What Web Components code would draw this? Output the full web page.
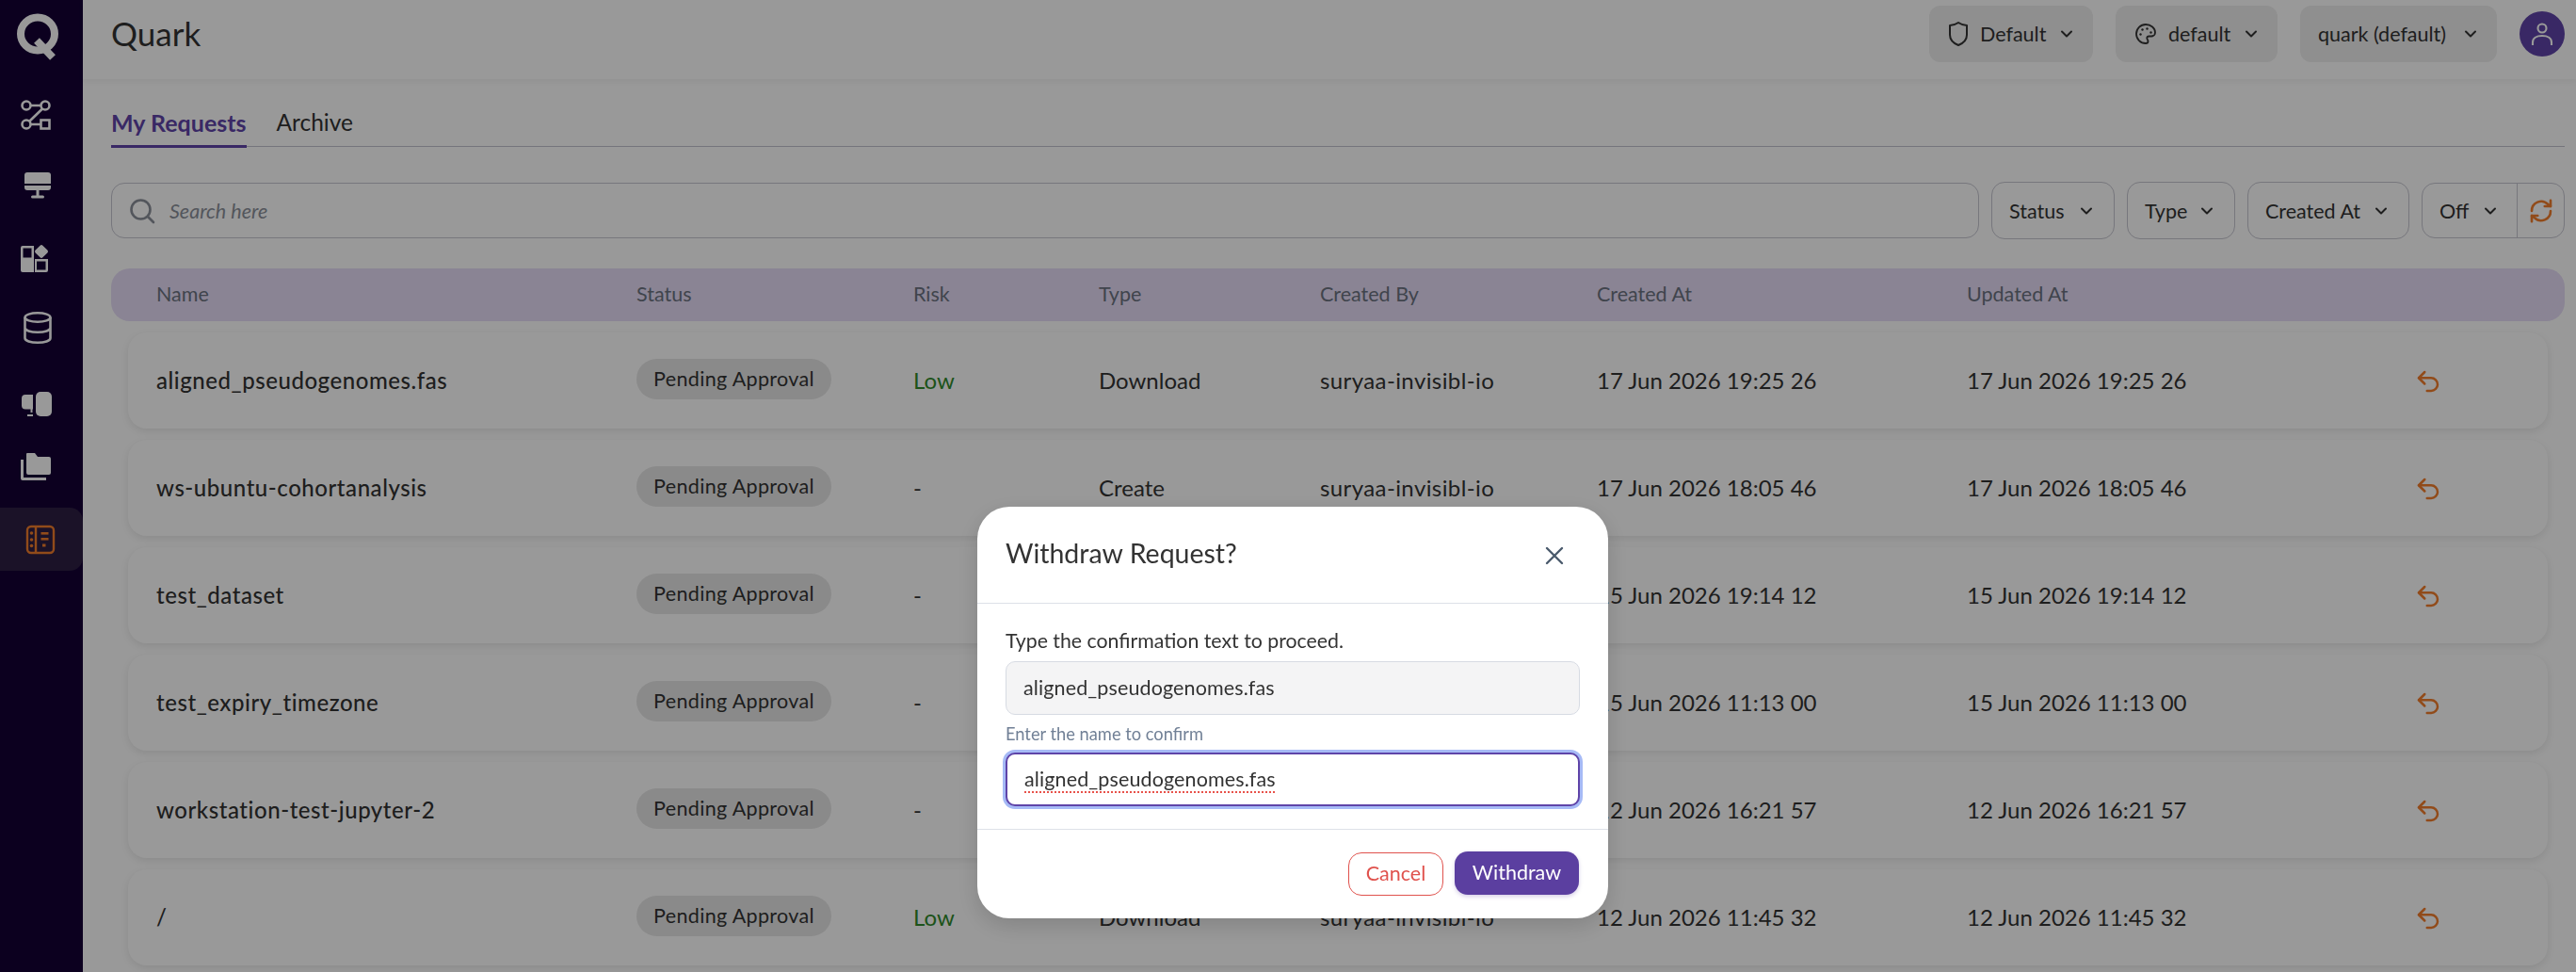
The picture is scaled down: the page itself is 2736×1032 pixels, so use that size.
<!DOCTYPE html>
<html lang="en"><head><meta charset="utf-8"><title>Quark</title>
<style>
html,body{margin:0;padding:0;width:2736px;height:1032px;overflow:hidden;background:#fff}
body{font-family:"Lato","Noto Sans",sans-serif;color:#333}
</style></head>
<body>
<q-app>
  <q-sidebar slot="side"></q-sidebar>
  <q-header slot="head" title="Quark"></q-header>
  <q-tabs slot="main"></q-tabs>
  <q-toolbar slot="main"></q-toolbar>
  <q-table-head slot="main"></q-table-head>
  <q-row slot="main" name="aligned_pseudogenomes.fas" risk="Low" type="Download" by="suryaa-invisibl-io" created="17 Jun 2026 19:25 26"></q-row>
  <q-row slot="main" name="ws-ubuntu-cohortanalysis" risk="-" type="Create" by="suryaa-invisibl-io" created="17 Jun 2026 18:05 46"></q-row>
  <q-row slot="main" name="test_dataset" risk="-" created="15 Jun 2026 19:14 12"></q-row>
  <q-row slot="main" name="test_expiry_timezone" risk="-" created="15 Jun 2026 11:13 00"></q-row>
  <q-row slot="main" name="workstation-test-jupyter-2" risk="-" created="12 Jun 2026 16:21 57"></q-row>
  <q-row slot="main" name="/" risk="Low" type="Download" by="suryaa-invisibl-io" created="12 Jun 2026 11:45 32"></q-row>
</q-app>
<q-overlay>
  <q-modal heading="Withdraw Request?" value="aligned_pseudogenomes.fas"></q-modal>
</q-overlay>
<script>
const chev='<svg width="16" height="16" viewBox="0 0 16 16" fill="none" stroke="currentColor" stroke-width="2" stroke-linecap="round" stroke-linejoin="round"><path d="M3 5.500 8 10.500l5-5"/></svg>';
function def(tag,render){
  customElements.define(tag,class extends HTMLElement{
    connectedCallback(){
      if(this.shadowRoot)return;
      this.attachShadow({mode:'open'}).innerHTML=render(this);
    }
  });
}
def('q-app',()=>`<style>
:host{display:grid;grid-template-columns:88px 1fr;grid-template-rows:84px 1fr;width:2736px;height:1032px;overflow:hidden}
.side{grid-row:1/3}
.main{display:flex;flex-direction:column;padding:0 12px 0 30px;overflow:hidden}
.head{position:relative;z-index:1}
</style>
<div class="side"><slot name="side"></slot></div>
<div class="head"><slot name="head"></slot></div>
<div class="main"><slot name="main"></slot></div>`);

def('q-sidebar',()=>`<style>
:host{display:flex;flex-direction:column;width:88px;height:1032px;background:#140035;color:#fff}
.logo{height:84px;display:flex;justify-content:center}
.logo svg{margin:12px 8px 0 0}
.nav{display:flex;flex-direction:column;padding-top:5px}
.it{height:67px;margin:0 0 7.500px;display:flex;align-items:center}
.a{margin-top:3px;background:#2d1e43;border-radius:0 14px 14px 0;color:#f27d2c}
</style>
<div class="logo"><svg width="48" height="52" viewBox="0 0 48 52" fill="none" stroke="currentColor"><ellipse cx="24" cy="24" rx="18" ry="17.500" stroke-width="8"/><path d="M23 31 40 49" stroke-width="8"/></svg></div>
<div class="nav">
<div class="it"><svg style="margin-left:21px" width="34" height="34" viewBox="0 0 34 34" fill="none" stroke="currentColor" stroke-width="2.600"><circle cx="7" cy="6" r="4.500"/><circle cx="27" cy="6" r="4.500"/><circle cx="7" cy="26" r="4.500"/><rect x="22.500" y="21.500" width="9" height="9"/><path d="M11.500 6H22.500M24 9.500 10 23M11.500 26H22.500"/></svg></div>
<div class="it"><svg style="margin-left:24px" width="32" height="32" viewBox="0 0 32 32" fill="currentColor"><path d="M5 2h22a3 3 0 0 1 3 3v9H2V5a3 3 0 0 1 3-3z"/><path d="M2 16h28v2a3 3 0 0 1-3 3H5a3 3 0 0 1-3-3z"/><rect x="14.500" y="21" width="3" height="6"/><rect x="9" y="26.500" width="14" height="3" rx="1.500"/></svg></div>
<div class="it"><svg style="margin-left:20px;margin-top:3px" width="34" height="34" viewBox="0 0 34 34" fill="currentColor"><path d="M4 5h12v14H2V7a2 2 0 0 1 2-2zM4.500 7.500v10h9v-10z" fill-rule="evenodd"/><rect x="18.500" y="5.500" width="11" height="11" rx="2" transform="rotate(45 24 11)"/><path d="M2 19h14v14H4a2 2 0 0 1-2-2z"/><path d="M17 19h14v12a2 2 0 0 1-2 2H17zM19 21.500v9h9.500v-9z" fill-rule="evenodd"/></svg></div>
<div class="it"><svg style="margin-left:23px;margin-top:4px" width="34" height="36" viewBox="0 0 34 36" fill="none" stroke="currentColor" stroke-width="2.600"><ellipse cx="17" cy="7" rx="13.500" ry="4.800"/><path d="M3.500 7v22c0 2.700 6 4.800 13.500 4.800s13.500-2.100 13.500-4.800V7M3.500 18c0 2.700 6 4.800 13.500 4.800s13.500-2.100 13.500-4.800"/></svg></div>
<div class="it"><svg style="margin-left:22px;margin-top:17px" width="34" height="28" viewBox="0 0 34 28" fill="currentColor"><rect x="16" y="1" width="17" height="26" rx="5"/><path d="M13 4v15.500H5a4 4 0 0 1-4-4v-7.500a4 4 0 0 1 4-4z"/><rect x="7" y="25" width="6" height="2"/><rect x="10.500" y="19" width="2" height="4"/></svg></div>
<div class="it"><svg style="margin-left:21px" width="34" height="32" viewBox="0 0 34 32" fill="currentColor"><path d="M8 2h8l3 4h12a2 2 0 0 1 2 2v15a2 2 0 0 1-2 2H9a2 2 0 0 1-2-2V3a1 1 0 0 1 1-1z"/><path d="M1 9h3v19h24v3H3a2 2 0 0 1-2-2z"/></svg></div>
<div class="it a"><svg style="margin-left:27px" width="32" height="32" viewBox="0 0 32 32" fill="none" stroke="currentColor" stroke-width="2.400"><rect x="2" y="2" width="28" height="28" rx="4"/><path d="M11 2v28"/><g fill="currentColor" stroke="none"><circle cx="6.500" cy="9" r="1.800"/><circle cx="6.500" cy="16" r="1.800"/><circle cx="6.500" cy="22.500" r="1.800"/><rect x="16.500" y="8" width="8" height="2.600"/><rect x="16.500" y="14" width="8" height="2.600"/><rect x="18" y="20.500" width="3.500" height="3"/></g></svg></div>
</div>`);

def('q-select',h=>`<style>
:host{display:inline-flex;align-items:center;font-size:21.500px;color:#333;box-sizing:border-box}
.t{flex:1}
.c{margin-left:13px;display:flex;color:#333}
.i{display:flex;margin-right:12px}
</style>${h.getAttribute('icon')==='shield'?`<span class="i"><svg width="22" height="28" viewBox="0 0 22 28" fill="none" stroke="#333" stroke-width="2" stroke-linejoin="round"><path d="M11 2c3 2 6 3 9 3v10c0 6-4 9-9 11-5-2-9-5-9-11V5c3 0 6-1 9-3z"/></svg></span>`:''}${h.getAttribute('icon')==='palette'?`<span class="i"><svg width="24" height="28" viewBox="0 0 24 24" fill="none" stroke="#333" stroke-width="1.800" stroke-linejoin="round"><path d="M12 2a10 10 0 0 0 0 20c1.400 0 2.500-1 2.500-2.300 0-.6-.3-1.100-.6-1.600-.3-.4-.6-.9-.6-1.500 0-1.200 1-2.100 2.200-2.100H18a4 4 0 0 0 4-4c0-4.700-4.500-8.500-10-8.500z"/><g fill="#333" stroke="none"><circle cx="13.500" cy="6.500" r="1.200"/><circle cx="17.500" cy="10.500" r="1.200"/><circle cx="8.500" cy="7.500" r="1.200"/><circle cx="6.500" cy="12.500" r="1.200"/></g></svg></span>`:''}<span class="t"><slot></slot></span><span class="c">${chev}</span>`);

def('q-header',h=>`<style>
:host{display:flex;align-items:center;height:84px;padding:0 12px 0 30px;box-sizing:border-box;background:#fff;box-shadow:0 3px 6px rgba(0,0,0,.05)}
h1{margin:0;font:400 35px "Lato","Noto Sans",sans-serif;color:#333;flex:1;position:relative;top:-7px}
.r{display:flex;align-items:center;gap:24px;position:relative;top:-6px}
q-select{background:#eee;border-radius:12px;height:60px;padding:0 20px}
.w1{width:174px}.w2{width:172px}.w3{width:209px;padding-left:19px}
.av{width:48px;height:48px;border-radius:50%;background:#5f44a8;display:flex;align-items:center;justify-content:center}
</style><h1>${h.getAttribute('title')}</h1><div class="r">
<q-select class="w1" icon="shield">Default</q-select><q-select class="w2" icon="palette">default</q-select><q-select class="w3">quark (default)</q-select>
<div class="av"><svg width="30" height="34" viewBox="0 0 30 34" fill="none" stroke="#fff" stroke-width="2.100"><circle cx="15" cy="11" r="4.500"/><path d="M5 29v-3c0-4.500 4-7 10-7s10 2.500 10 7v3"/></svg></div></div>`);

def('q-tabs',()=>`<style>
:host{display:flex;gap:32px;height:72px;box-sizing:border-box;border-bottom:1.500px solid #c4c4cf;align-items:flex-end;font-size:24.500px}
span{height:38px;padding-bottom:5px;line-height:38px;margin-bottom:-1.500px;border-bottom:3px solid transparent}
.on{font-size:25px;color:#5f44a8;font-weight:700;border-color:#5f44a8}
</style><span class="on">My Requests</span><span>Archive</span>`);

def('q-toolbar',()=>`<style>
:host{display:flex;align-items:center;gap:13px;margin-top:37px;height:61px;font-size:21.500px}
.s{flex:1;height:59px;box-sizing:border-box;border:1.500px solid #c6c6d0;border-radius:14px;display:flex;align-items:center;padding-left:18px;gap:15px;font-style:italic;color:#8a8f99}
q-select,.off{height:61px;border:1.500px solid #c6c6d0;border-radius:14px}
q-select{padding:0 21px 0 18px}
.off{height:59px;box-sizing:border-box;display:flex;align-items:center;width:152px;flex:none}
.off q-select{border:0;height:100%;padding:0 20px 0 18px;width:101px;border-right:1.500px solid #c6c6d0;border-radius:0}
.ref{flex:1;display:flex;justify-content:center}
</style><div class="s"><svg width="28" height="28" viewBox="0 0 28 28" fill="none" stroke="#8a8f99" stroke-width="2.600"><circle cx="12.500" cy="12.500" r="10"/><path d="M20 20l6 6" stroke-linecap="round"/></svg>Search here</div>
<q-select style="width:131px">Status</q-select><q-select style="width:115px">Type</q-select><q-select style="width:172px">Created At</q-select>
<div class="off"><q-select>Off</q-select><span class="ref"><svg width="30" height="30" viewBox="0 0 24 24" fill="none" stroke="#f27d2c" stroke-width="2.100" stroke-linecap="round" stroke-linejoin="round"><path d="M4 12a8 8 0 0 1 13.700-5.700L20 8"/><path d="M20 3v5h-5"/><path d="M20 12a8 8 0 0 1-13.700 5.700L4 16"/><path d="M9 16H4v5"/></svg></span></div>`);

const cols='grid-template-columns:510px 294px 197px 235px 294px 393px 479px 1fr';
def('q-table-head',()=>`<style>
:host{display:grid;${cols};align-items:center;margin-top:31px;height:56px;padding-left:48px;background:#e6dcf7;border-radius:20px;font-size:21.500px;color:#6b7280}
span{position:relative;top:-1px}
</style><span>Name</span><span>Status</span><span>Risk</span><span>Type</span><span>Created By</span><span>Created At</span><span>Updated At</span><span></span>`);

def('q-row',h=>{const g=a=>h.getAttribute(a)||'';return `<style>
:host{display:grid;${cols};align-items:center;flex:none;height:102px;margin:12px 18px 0;padding-left:30px;background:#fff;border-radius:20px;box-shadow:0 3px 9px rgba(0,0,0,.09);font-size:24px;color:#333}
span{position:relative;top:-1px}
.n{font-weight:500;letter-spacing:.55px}
.by{letter-spacing:.4px}
.p{display:inline-block;top:-1px;background:#e6e6e6;border-radius:22px;height:43px;line-height:43px;padding:0 18px;font-size:21.500px;letter-spacing:.35px}
.low{color:#2f8a2b}
svg{display:block;margin-left:-4px;margin-top:1px}
</style><span class="n">${g('name')}</span><span><span class="p">Pending Approval</span></span><span class="${g('risk')==='Low'?'low':''}">${g('risk')}</span><span>${g('type')}</span><span class="by">${g('by')}</span><span>${g('created')}</span><span>${g('created')}</span>
<svg width="30" height="30" viewBox="0 0 24 24" fill="none" stroke="#f27d2c" stroke-width="2" stroke-linecap="round" stroke-linejoin="round"><path d="M9 14 4 9l5-5"/><path d="M4 9h10.500a5.500 5.500 0 0 1 0 11H11"/></svg>`});

def('q-overlay',()=>`<style>
:host{position:fixed;inset:0;z-index:10;background:rgba(0,0,0,.4);display:block}
::slotted(q-modal){position:absolute;left:1038px;top:538px}
</style><slot></slot>`);

def('q-modal',h=>`<style>
:host{display:flex;flex-direction:column;width:670px;height:437px;box-sizing:border-box;background:#fff;border-radius:34px;overflow:hidden;color:#333;box-shadow:0 8px 24px rgba(0,0,0,.15)}
.t{height:103px;box-sizing:border-box;padding:0 30px;display:flex;align-items:center;justify-content:space-between;border-bottom:1.500px solid #dde1e8;font-size:28.500px;padding-bottom:4px}
.b{flex:1;padding:0 30px;display:flex;flex-direction:column;border-bottom:1.500px solid #dde1e8}
.l{font-size:21.300px;margin-top:26px;height:35px;line-height:26px}
.i{height:57px;box-sizing:border-box;border:1.500px solid #d7dbe3;border-radius:10px;background:#f4f4f5;display:flex;align-items:center;padding:0 0 2px 18px;font-size:21.500px;letter-spacing:.12px}
.h{font-size:18.300px;color:#718096;height:40px;line-height:40px}
.f{border:2px solid #5f44a8;background:#fff;box-shadow:0 0 0 3px #a6baf6;padding-bottom:1px}
.f span{text-decoration:underline dotted #e8524a 2px;text-underline-offset:5px}
.a{height:94px;box-sizing:border-box;padding:23px 31px 0 0;display:flex;justify-content:flex-end;gap:12px;align-items:flex-start}
.btn{height:46px;box-sizing:border-box;border-radius:14px;font-size:21.500px;display:flex;align-items:center;justify-content:center;padding-bottom:2px}
.c{width:101px;border:1.500px solid #e0524d;color:#e0524d;margin-top:1px}
.w{width:132px;background:#5b3fa0;color:#fff;box-shadow:0 2px 4px rgba(91,63,160,.25)}
svg{margin:5px 16px 0 0}
</style><div class="t"><span>${h.getAttribute('heading')}</span><svg width="22" height="22" viewBox="0 0 22 22" fill="none" stroke="#4a5a6c" stroke-width="2.400" stroke-linecap="round"><path d="M3 3l16 16M19 3 3 19"/></svg></div>
<div class="b"><div class="l">Type the confirmation text to proceed.</div><div class="i">${h.getAttribute('value')}</div><div class="h">Enter the name to confirm</div><div class="i f"><span>${h.getAttribute('value')}</span></div></div>
<div class="a"><div class="btn c">Cancel</div><div class="btn w">Withdraw</div></div>`);
</script>
</body></html>
